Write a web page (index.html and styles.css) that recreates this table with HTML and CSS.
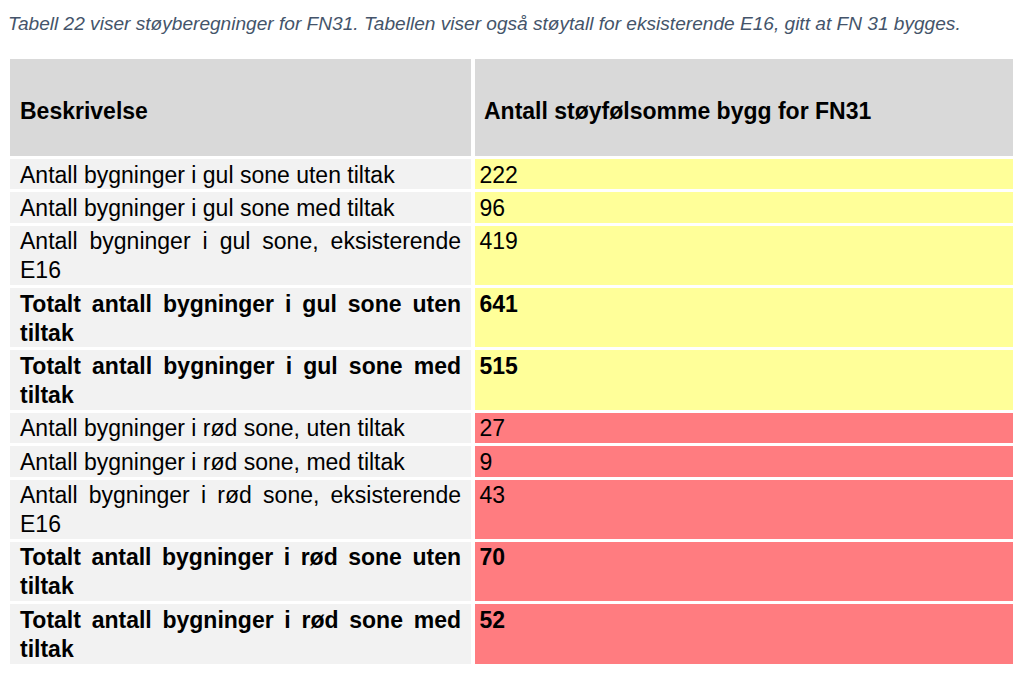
FILE: index.html
```html
<!DOCTYPE html>
<html lang="no">
<head>
<meta charset="utf-8">
<title>Tabell 22</title>
<link rel="stylesheet" href="styles.css">
</head>
<body>
<p class="caption">Tabell 22 viser støyberegninger for FN31. Tabellen viser også støytall for eksisterende E16, gitt at FN 31 bygges.</p>
<table class="noise">
  <colgroup>
    <col class="c1">
    <col class="c2">
  </colgroup>
  <thead>
    <tr>
      <th class="h1">Beskrivelse</th>
      <th class="h2">Antall støyfølsomme bygg for FN31</th>
    </tr>
  </thead>
  <tbody>
    <tr class="gul">
      <td class="desc">Antall bygninger i gul sone uten tiltak</td>
      <td class="val">222</td>
    </tr>
    <tr class="gul">
      <td class="desc">Antall bygninger i gul sone med tiltak</td>
      <td class="val">96</td>
    </tr>
    <tr class="gul">
      <td class="desc">Antall bygninger i gul sone, eksisterende E16</td>
      <td class="val">419</td>
    </tr>
    <tr class="gul total">
      <td class="desc">Totalt antall bygninger i gul sone uten tiltak</td>
      <td class="val">641</td>
    </tr>
    <tr class="gul total">
      <td class="desc">Totalt antall bygninger i gul sone med tiltak</td>
      <td class="val">515</td>
    </tr>
    <tr class="rod">
      <td class="desc">Antall bygninger i rød sone, uten tiltak</td>
      <td class="val">27</td>
    </tr>
    <tr class="rod">
      <td class="desc">Antall bygninger i rød sone, med tiltak</td>
      <td class="val">9</td>
    </tr>
    <tr class="rod">
      <td class="desc">Antall bygninger i rød sone, eksisterende E16</td>
      <td class="val">43</td>
    </tr>
    <tr class="rod total">
      <td class="desc">Totalt antall bygninger i rød sone uten tiltak</td>
      <td class="val">70</td>
    </tr>
    <tr class="rod total">
      <td class="desc">Totalt antall bygninger i rød sone med tiltak</td>
      <td class="val">52</td>
    </tr>
  </tbody>
</table>
</body>
</html>
```

FILE: styles.css
```css
html, body {
  margin: 0;
  padding: 0;
  background: #ffffff;
}

body {
  font-family: "Liberation Sans", Arial, sans-serif;
  color: #000000;
}

.caption {
  margin: 13px 0 0 8px;
  font-size: 19.1px;
  line-height: 22px;
  font-style: italic;
  color: #44546a;
  white-space: nowrap;
}

.noise {
  margin: 21px 0 0 6px;
  border-collapse: separate;
  border-spacing: 4px 3px;
  table-layout: fixed;
  width: 1011px;
  font-size: 23px;
  line-height: 28.9px;
}

.c1 { width: 461px; }
.c2 { width: 538px; }

.noise th {
  box-sizing: border-box;
  height: 97px;
  background: #d9d9d9;
  font-weight: bold;
  text-align: left;
  vertical-align: top;
  padding: 38px 10px 0 10px;
}

.noise th.h2 {
  padding-left: 9px;
}

.noise td {
  vertical-align: top;
  padding: 1.5px 10px 0 10px;
}

.noise td.desc {
  background: #f2f2f2;
  text-align: justify;
}

.noise td.val {
  padding-left: 4.5px;
  text-align: left;
}

.gul td.val { background: #ffff99; }
.rod td.val { background: #ff7c80; }

.total td { font-weight: bold; }
```
